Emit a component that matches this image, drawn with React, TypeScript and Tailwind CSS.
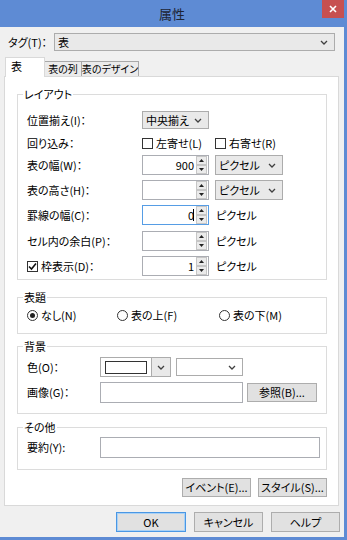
import React from 'react';

const FONT = "font-[family-name:'Noto_Sans_CJK_JP','Noto_Sans',sans-serif] [font-feature-settings:'palt']";

function Chevron() {
  return (
    <svg width="8" height="5" viewBox="0 0 8 5" className="shrink-0">
      <path d="M1 1 L4 4 L7 1" fill="none" stroke="#404040" strokeWidth="1.3" />
    </svg>
  );
}

function Select({ text, className, white }: { text?: string; className: string; white?: boolean }) {
  return (
    <div
      className={`flex items-center justify-between border pl-[3px] pr-[6px] ${
        white ? 'border-[#acacac] bg-white' : 'border-[#acacac] bg-[#e9e9e9]'
      } ${className}`}
    >
      <span className="leading-none">{text}</span>
      <Chevron />
    </div>
  );
}

function SpinBtn({ up }: { up?: boolean }) {
  return (
    <div className="flex h-[9px] w-[11px] items-center justify-center border border-[#c6c6c6] bg-[#ebebeb]">
      <svg width="5" height="3" viewBox="0 0 5 3">
        <path d={up ? 'M0 3 L2.5 0 L5 3 Z' : 'M0 0 L2.5 3 L5 0 Z'} fill="#222" />
      </svg>
    </div>
  );
}

function SpinInput({ value, focused }: { value?: string; focused?: boolean }) {
  return (
    <div
      className={`flex h-[20px] w-[67px] items-center border bg-white ${
        focused ? 'border-[#569de5]' : 'border-[#abadb3]'
      }`}
    >
      <div className="flex flex-1 items-center justify-end pr-[2px] leading-none">
        {value}
        {focused && <span className="ml-[-1px] h-[12px] w-px bg-black" />}
      </div>
      <div className="mr-px flex flex-col">
        <SpinBtn up />
        <SpinBtn />
      </div>
    </div>
  );
}

function Check({ checked }: { checked?: boolean }) {
  return (
    <div className="flex h-[11px] w-[11px] shrink-0 items-center justify-center border border-[#333] bg-white">
      {checked && (
        <svg width="9" height="9" viewBox="0 0 9 9">
          <path d="M1 4.5 L3.5 7 L8 1.5" fill="none" stroke="#111" strokeWidth="1.6" />
        </svg>
      )}
    </div>
  );
}

function Radio({ checked }: { checked?: boolean }) {
  return (
    <div className="flex h-[11px] w-[11px] shrink-0 items-center justify-center rounded-full border border-[#333] bg-white">
      {checked && <div className="h-[5px] w-[5px] rounded-full bg-[#222]" />}
    </div>
  );
}

function Button({ children, className, primary }: { children: React.ReactNode; className: string; primary?: boolean }) {
  return (
    <div
      className={`flex items-center justify-center border bg-[#e1e1e1] leading-none ${
        primary ? 'border-[#4a97e4] shadow-[inset_0_0_0_1px_#a9d1f5]' : 'border-[#adadad]'
      } ${className}`}
    >
      {children}
    </div>
  );
}

function Group({ title, className, children }: { title: string; className?: string; children: React.ReactNode }) {
  return (
    <fieldset className={`w-[310px] border border-[#dcdcdc] ${className ?? ''}`}>
      <legend className="ml-[5px] px-[1px] leading-[14px]">{title}</legend>
      {children}
    </fieldset>
  );
}

function Row({ label, className, children, labelW = 'w-[115px]' }: { label: React.ReactNode; className: string; children?: React.ReactNode; labelW?: string }) {
  return (
    <div className={`flex h-[20px] items-center pl-[9px] ${className}`}>
      <div className={`${labelW} shrink-0`}>{label}</div>
      {children}
    </div>
  );
}

export default function App() {
  return (
    <div className={`${FONT} flex h-[540px] w-[347px] flex-col overflow-hidden whitespace-nowrap border-r-[3px] border-b-[3px] border-[#5e8bd4] bg-[#f0f0f0] text-[11px] text-black`}>
      {/* title bar */}
      <div className="relative flex h-[27px] shrink-0 items-center justify-center bg-[#5e8bd4] text-[13px] text-[#1d2433]">
        属性
        <div className="absolute right-0 top-0 flex h-[18px] w-[22px] items-center justify-center bg-[#c75050]">
          <svg width="8" height="8" viewBox="0 0 8 8">
            <path d="M1 1 L7 7 M7 1 L1 7" stroke="#fff" strokeWidth="1.6" />
          </svg>
        </div>
      </div>

      {/* tag row */}
      <div className="mt-[6px] flex items-center pl-[8px]">
        <div className="w-[46px]">タグ(T)：</div>
        <Select text="表" className="h-[18px] w-[281px]" />
      </div>

      {/* tabs */}
      <div className="ml-[5px] mt-[6px] flex h-[19px] shrink-0 items-end">
        <div className="relative z-10 -mb-px flex h-[20px] w-[40px] items-start border-x border-t border-[#d9d9d9] bg-white pl-[5px] pt-[3px] leading-none">
          表
        </div>
        <div className="flex h-[15px] w-[37px] items-center justify-center border-t border-r border-[#a8a8a8] bg-[#ebebeb] text-[10px] leading-none">
          表の列
        </div>
        <div className="flex h-[15px] w-[57px] items-center justify-center border-t border-r border-[#a8a8a8] bg-[#ebebeb] text-[10px] leading-none">
          表のデザイン
        </div>
      </div>

      {/* panel */}
      <div className="ml-[4px] flex h-[430px] w-[335px] shrink-0 flex-col border border-[#d9d9d9] bg-white pl-[12px]">
        <Group title="レイアウト" className="mt-[10px] pb-[3px]">
          <Row label="位置揃え(I)：" className="mt-[9px]">
            <Select text="中央揃え" className="h-[18px] w-[67px]" />
          </Row>
          <Row label="回り込み：" className="mt-[3px]">
            <div className="flex w-[73px] items-center gap-[3px]">
              <Check />
              <span>左寄せ(L)</span>
            </div>
            <div className="flex items-center gap-[3px]">
              <Check />
              <span>右寄せ(R)</span>
            </div>
          </Row>
          <Row label="表の幅(W)：" className="mt-[2px]">
            <SpinInput value="900" />
            <Select text="ピクセル" className="ml-[6px] h-[20px] w-[68px]" />
          </Row>
          <Row label="表の高さ(H)：" className="mt-[5px]">
            <SpinInput />
            <Select text="ピクセル" className="ml-[6px] h-[20px] w-[68px]" />
          </Row>
          <Row label="罫線の幅(C)：" className="mt-[5px]">
            <SpinInput value="0" focused />
            <span className="ml-[7px]">ピクセル</span>
          </Row>
          <Row label="セル内の余白(P)：" className="mt-[6px]">
            <SpinInput />
            <span className="ml-[7px]">ピクセル</span>
          </Row>
          <Row
            label={
              <div className="flex items-center gap-[3px]">
                <Check checked />
                <span>枠表示(D)：</span>
              </div>
            }
            className="mt-[5px]"
          >
            <SpinInput value="1" />
            <span className="ml-[7px]">ピクセル</span>
          </Row>
        </Group>

        <Group title="表題" className="mt-[10px] pb-[8px]">
          <div className="mt-px flex h-[20px] items-center pl-[9px]">
            <div className="flex w-[90px] items-center gap-[3px]">
              <Radio checked />
              <span>なし(N)</span>
            </div>
            <div className="flex w-[102px] items-center gap-[3px]">
              <Radio />
              <span>表の上(F)</span>
            </div>
            <div className="flex items-center gap-[3px]">
              <Radio />
              <span>表の下(M)</span>
            </div>
          </div>
        </Group>

        <Group title="背景" className="mt-[5px] pb-[10px]">
          <Row label="色(O)：" labelW="w-[73px]" className="mt-[4px]">
            <div className="flex h-[20px] w-[71px] items-center border border-[#acacac] bg-white">
              <div className="ml-[4px] h-[13px] w-[42px] border border-[#333] bg-white" />
              <div className="ml-auto flex h-full w-[19px] items-center justify-center border-l border-[#acacac] bg-[#e9e9e9]">
                <Chevron />
              </div>
            </div>
            <Select white className="ml-[5px] h-[18px] w-[67px]" />
          </Row>
          <Row label="画像(G)：" labelW="w-[73px]" className="mt-[5px] h-[21px]">
            <div className="h-[21px] w-[143px] border border-[#abadb3] bg-white" />
            <Button className="ml-[4px] h-[19px] w-[70px]">参照(B)...</Button>
          </Row>
        </Group>

        <Group title="その他" className="mt-[6px] pb-[11px]">
          <Row label="要約(Y):" labelW="w-[73px]" className="mt-[3px] h-[21px]">
            <div className="h-[21px] w-[220px] border border-[#abadb3] bg-white" />
          </Row>
        </Group>

        <div className="mt-[8px] flex w-[310px] justify-end gap-[7px]">
          <Button className="h-[19px] w-[69px]">イベント(E)...</Button>
          <Button className="h-[19px] w-[69px]">スタイル(S)...</Button>
        </div>
      </div>

      {/* dialog buttons */}
      <div className="mt-[6px] flex justify-end gap-[8px] pr-[4px]">
        <Button primary className="h-[20px] w-[70px]">OK</Button>
        <Button className="h-[20px] w-[69px]">キャンセル</Button>
        <Button className="h-[20px] w-[69px]">ヘルプ</Button>
      </div>
    </div>
  );
}
